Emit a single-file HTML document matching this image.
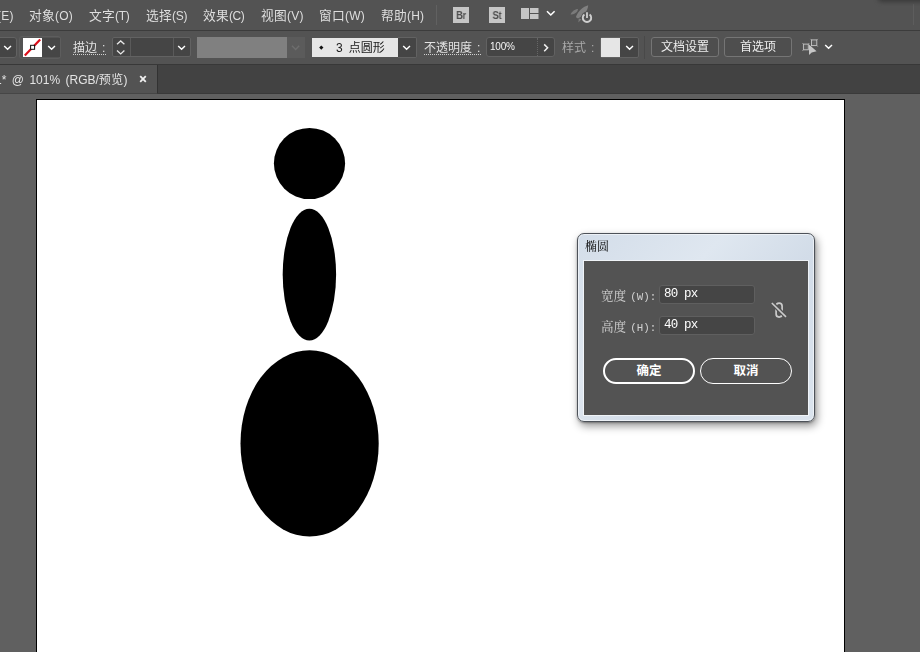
<!DOCTYPE html>
<html lang="zh-CN">
<head>
<meta charset="utf-8">
<title>Adobe Illustrator</title>
<style>
html,body{margin:0;padding:0}
body{width:920px;height:652px;overflow:hidden;position:relative;background:#606060;
  font-family:"Liberation Sans","Noto Sans CJK SC",sans-serif;font-size:12px;line-height:1;color:#dcdcdc}
*{box-sizing:border-box}
#root{position:absolute;left:0;top:0;width:920px;height:652px;overflow:hidden;transform:translateZ(0)}
.abs{position:absolute}
.cj{font-family:"Liberation Sans","Noto Sans CJK SC",sans-serif}
.cj.r{font-family:"Liberation Serif","Noto Serif CJK SC",serif}
.cj.b{font-weight:bold}
#menubar .cj{font-size:1.06em}
#tab .cj{letter-spacing:.3px}
.t{position:absolute;white-space:nowrap;line-height:14px;height:14px}
.t,.lab,.btn,.appbox span,.inp span,.dl,.pill span{will-change:transform}

/* ---------- menu bar ---------- */
#menubar{position:absolute;left:0;top:0;width:920px;height:30px;background:#535353}
#menubar .t{top:9px;color:#dedede;letter-spacing:.25px}
#line1{position:absolute;left:0;top:30px;width:920px;height:1px;background:#3c3c3c}
.appbox span{display:block;transform:scaleX(.86)}
.appbox{position:absolute;top:7px;width:16px;height:16px;background:#c6c6c6;color:#505050;
  font-weight:bold;font-size:11px;line-height:16px;text-align:center;letter-spacing:-0.3px}

/* ---------- control bar ---------- */
#ctrl{position:absolute;left:0;top:31px;width:920px;height:33px;background:#535353}
#line2{position:absolute;left:0;top:64px;width:920px;height:1px;background:#383838}
.dd{position:absolute;background:#454545;border:1px solid #626262}
.lab{position:absolute;top:41px;height:14px;line-height:14px;white-space:nowrap;color:#e2e2e2}
.dot{border-bottom:1px dotted #d0d0d0}
.btn{position:absolute;top:37px;height:20px;border:1px solid #757575;border-radius:3px;background:#4e4e4e;
  color:#ededed;text-align:center;line-height:18px;white-space:nowrap}

/* ---------- tab bar ---------- */
#tabbar{position:absolute;left:0;top:65px;width:920px;height:28px;background:#424242}
#tab{position:absolute;left:0;top:0;width:158px;height:28px;background:#535353;border-right:1px solid #323232}

/* ---------- canvas ---------- */
#art{position:absolute;left:36px;top:99px;width:809px;height:600px;background:#fff;border:1px solid #000}

/* ---------- dialog ---------- */
#dlg{position:absolute;left:577px;top:233px;width:238px;height:189px;border-radius:7px;
  border:1px solid #4d5259;background:linear-gradient(135deg,#d3dde9 0%,#dfe7f0 35%,#d2dce8 60%,#dbe4ee 100%);
  box-shadow:0 0 0 1px rgba(255,255,255,.55) inset, 2px 4px 9px rgba(0,0,0,.42), 0 1px 2px rgba(0,0,0,.3)}
#dlgin{position:absolute;left:6px;top:27px;width:224px;height:154px;background:#535353;
  box-shadow:0 0 0 1px rgba(255,255,255,.6)}
.inp{position:absolute;left:75px;width:96px;height:19px;background:#454545;border:1px solid #5f5f5f;border-radius:3px}
.inp span{position:absolute;left:3.8px;top:1px;font-family:"Liberation Mono",monospace;font-size:12.5px;line-height:14px;
  color:#fff;letter-spacing:-0.8px;white-space:pre}
.dl{position:absolute;left:16.7px;height:14px;line-height:14px;color:#d2d2d2;white-space:pre;
  font-family:"Liberation Mono","Noto Serif CJK SC",monospace;font-size:10.8px}
.dl .cj{font-size:12.6px}
.dl i{font-style:normal;margin-left:-2.3px}
.pill{position:absolute;top:97px;height:26px;border-radius:13px;color:#fff;text-align:center;font-size:12.5px}
</style>
</head>
<body>
<div id="root">

<!-- ================= MENU BAR ================= -->
<div id="menubar">
  <div class="t" style="left:-3px">(E)</div>
  <div class="t" style="left:28.5px"><span class="cj">对象</span>(O)</div>
  <div class="t" style="left:89px"><span class="cj">文字</span><span style="letter-spacing:-.3px">(T)</span></div>
  <div class="t" style="left:146px"><span class="cj">选择</span><span style="letter-spacing:-.25px">(S)</span></div>
  <div class="t" style="left:203px"><span class="cj">效果</span><span style="letter-spacing:-.4px">(C)</span></div>
  <div class="t" style="left:261px"><span class="cj">视图</span>(V)</div>
  <div class="t" style="left:319px"><span class="cj">窗口</span>(W)</div>
  <div class="t" style="left:381px"><span class="cj">帮助</span>(H)</div>
  <div class="abs" style="left:436px;top:5px;width:1px;height:20px;background:#616161"></div>
  <div class="appbox" style="left:453px"><span>Br</span></div>
  <div class="appbox" style="left:489px"><span>St</span></div>
  <!-- workspace layout icon -->
  <svg class="abs" style="left:521px;top:8px" width="18" height="11" viewBox="0 0 18 11">
    <rect x="0" y="0" width="8" height="11" fill="#c6c6c6"/>
    <rect x="9" y="0" width="8.5" height="5" fill="#c6c6c6"/>
    <rect x="9" y="6" width="8.5" height="5" fill="#c6c6c6"/>
  </svg>
  <svg class="abs" style="left:546px;top:10px" width="10" height="7" viewBox="0 0 10 7">
    <path d="M1 1.3 L4.8 5 L8.6 1.3" fill="none" stroke="#fff" stroke-width="1.6"/>
  </svg>
  <!-- rocket / GPU performance icon -->
  <svg class="abs" style="left:568px;top:3px" width="26" height="22" viewBox="0 0 26 22">
    <path d="M20.2 2.2 C15.2 3.4 9.6 8.6 8 13.8 C8.3 15 9.4 15.6 10.4 15.2 C15.4 13 19.8 8 20.2 2.2 Z" fill="#808080"/>
    <path d="M10 6 C7 6 3.8 8.4 2.6 11.5 C5.4 11.8 8 10.2 9.4 8.2 Z" fill="#7a7a7a"/>
    <path d="M10.8 15.4 L10.3 19.6 L13.6 16.2 Z" fill="#7a7a7a"/>
    <circle cx="19" cy="14.7" r="6.1" fill="#535353"/>
    <path d="M16.4 11.5 A4.2 4.2 0 1 0 21.6 11.5" fill="none" stroke="#cfcfcf" stroke-width="1.9"/>
    <path d="M19 9.3 V15" stroke="#cfcfcf" stroke-width="1.8"/>
  </svg>
  <div class="abs" style="left:913px;top:4px;width:1px;height:21px;background:#5d5d5d"></div>
  <div class="abs" style="left:878px;top:-6px;width:60px;height:8px;border-radius:4px;background:#3a3a3a;filter:blur(2px)"></div>
</div>
<div id="line1"></div>

<!-- ================= CONTROL BAR ================= -->
<div id="ctrl"></div>
<div id="line2"></div>

<!-- fill dropdown (cut off at left) -->
<div class="dd" style="left:-4px;top:37px;width:21px;height:21px;border-radius:3px"></div>
<svg class="abs" style="left:3px;top:45px" width="10" height="6" viewBox="0 0 10 6"><path d="M1.2 0.9 L4.6 4.2 L8 0.9" fill="none" stroke="#fff" stroke-width="1.45"/></svg>

<!-- stroke swatch + dropdown -->
<div class="abs" style="left:19px;top:36px;width:42px;height:23px;border-radius:3px;border:1px solid #5d5d5d"></div>
<div class="abs" style="left:42px;top:38px;width:18px;height:19px;background:#464646"></div>
<svg class="abs" style="left:23px;top:38px" width="19" height="19" viewBox="0 0 19 19">
  <rect width="19" height="19" fill="#fff"/>
  <path d="M1.8 17.4 L17.2 1.4" stroke="#dc0f1b" stroke-width="2.2"/>
  <rect x="7.6" y="7.3" width="4" height="4" fill="#fff" stroke="#111" stroke-width="1"/>
</svg>
<svg class="abs" style="left:47px;top:45px" width="10" height="6" viewBox="0 0 10 6"><path d="M1.2 0.9 L4.6 4.2 L8 0.9" fill="none" stroke="#fff" stroke-width="1.45"/></svg>

<!-- stroke label -->
<div class="lab dot" style="left:73px;width:33px"><span class="cj">描边</span><span style="margin-left:5px">:</span></div>

<!-- stroke weight stepper -->
<div class="dd" style="left:112px;top:37px;width:79px;height:20px;border-radius:2px"></div>
<div class="abs" style="left:130px;top:38px;width:1px;height:18px;background:#5a5a5a"></div>
<div class="abs" style="left:173px;top:38px;width:1px;height:18px;background:#5a5a5a"></div>
<svg class="abs" style="left:116px;top:40px" width="10" height="15" viewBox="0 0 10 15">
  <path d="M1 4.2 L4.7 0.9 L8.4 4.2" fill="none" stroke="#e8e8e8" stroke-width="1.3"/>
  <path d="M1 10.6 L4.7 13.9 L8.4 10.6" fill="none" stroke="#e8e8e8" stroke-width="1.3"/>
</svg>
<svg class="abs" style="left:177px;top:45px" width="10" height="6" viewBox="0 0 10 6"><path d="M1.2 0.9 L4.6 4.2 L8 0.9" fill="none" stroke="#fff" stroke-width="1.45"/></svg>

<!-- disabled variable-width profile -->
<div class="abs" style="left:197px;top:37px;width:90px;height:21px;background:#808080"></div>
<div class="abs" style="left:287px;top:37px;width:18px;height:21px;background:#5b5b5b"></div>
<svg class="abs" style="left:291px;top:45px" width="10" height="6" viewBox="0 0 10 6"><path d="M1 0.8 L4.6 4.4 L8.2 0.8" fill="none" stroke="#6e6e6e" stroke-width="1.4"/></svg>

<!-- brush definition -->
<div class="abs" style="left:312px;top:38px;width:86px;height:19px;background:#e6e6e6"></div>
<div class="abs" style="left:320.2px;top:46px;width:2.6px;height:2.6px;background:#111;transform:rotate(45deg)"></div>
<div class="lab thin" style="left:336.4px;color:#1a1a1a">3<span style="margin-left:6px"><span class="cj">点圆形</span></span></div>
<div class="dd" style="left:398px;top:37px;width:19px;height:21px;border-left:none;border-radius:0 2px 2px 0"></div>
<svg class="abs" style="left:402px;top:45px" width="10" height="6" viewBox="0 0 10 6"><path d="M1.2 0.9 L4.6 4.2 L8 0.9" fill="none" stroke="#fff" stroke-width="1.45"/></svg>

<!-- opacity -->
<div class="lab dot" style="left:424px;width:57px"><span class="cj">不透明度</span><span style="margin-left:5px">:</span></div>
<div class="dd" style="left:486px;top:37px;width:69px;height:20px;border-radius:3px"></div>
<div class="abs" style="left:537px;top:38px;width:0;height:18px;border-left:1px dotted #666"></div>
<div class="t" style="left:490px;top:40px;font-size:10px;color:#f4f4f4;letter-spacing:-0.2px">100%</div>
<svg class="abs" style="left:543px;top:43px" width="7" height="10" viewBox="0 0 7 10"><path d="M1.2 1.4 L4.6 4.8 L1.2 8.2" fill="none" stroke="#f2f2f2" stroke-width="1.5"/></svg>

<!-- style -->
<div class="lab" style="left:562px;color:#a9a9a9"><span class="cj">样式</span><span style="margin-left:5px">:</span></div>
<div class="dd" style="left:600px;top:37px;width:39px;height:21px;border-radius:2px"></div>
<div class="abs" style="left:601px;top:38px;width:19px;height:19px;background:#e6e6e6"></div>
<svg class="abs" style="left:625px;top:45px" width="10" height="6" viewBox="0 0 10 6"><path d="M1.2 0.9 L4.6 4.2 L8 0.9" fill="none" stroke="#fff" stroke-width="1.45"/></svg>
<div class="abs" style="left:644px;top:36px;width:1px;height:23px;background:#494949"></div>

<!-- buttons -->
<div class="btn" style="left:651px;width:68px"><span class="cj">文档设置</span></div>
<div class="btn" style="left:724px;width:68px"><span class="cj">首选项</span></div>

<!-- align-to icon -->
<svg class="abs" style="left:800px;top:37px" width="36" height="20" viewBox="0 0 36 20">
  <rect x="3.4" y="7.1" width="4.9" height="5.7" fill="#5f5f5f" stroke="#c6c6c6" stroke-width="0.9"/>
  <rect x="11.5" y="2.9" width="5.3" height="5.7" fill="#5f5f5f" stroke="#c6c6c6" stroke-width="0.9"/>
  <path d="M2.4 6.1 l1.4 1.4 M9.3 6.1 l-1.4 1.4 M2.4 13.8 l1.4 -1.4 M10.5 1.9 l1.4 1.4 M17.8 1.9 l-1.4 1.4 M17.8 9.6 l-1.4 -1.4" stroke="#b0b0b0" stroke-width="0.8"/>
  <path d="M9 7.4 V18 L11.7 15.4 L16.6 14.3 Z" fill="#c6c6c6"/>
  <path d="M25.2 8 L28.6 11.2 L32 8" fill="none" stroke="#fff" stroke-width="1.5"/>
</svg>

<!-- ================= TAB BAR ================= -->
<div id="tabbar">
  <div id="tab">
    <div class="t" style="left:-4.6px;top:8px;color:#e4e4e4;word-spacing:2.1px">1* @ 101% (RGB/<span class="cj">预览</span>)</div>
    <svg class="abs" style="left:139px;top:10px" width="8" height="8" viewBox="0 0 8 8"><path d="M1.2 1.2 L6.8 6.8 M6.8 1.2 L1.2 6.8" stroke="#f0f0f0" stroke-width="1.8"/></svg>
  </div>
</div>

<div class="abs" style="left:0;top:93px;width:920px;height:1px;background:#3a3a3a"></div>
<div class="abs" style="left:0;top:93px;width:157px;height:1px;background:#464646"></div>

<!-- ================= CANVAS ================= -->
<div id="art"></div>
<svg class="abs" style="left:0;top:93px" width="920" height="559" viewBox="0 93 920 559">
  <ellipse cx="309.5" cy="163.5" rx="35.6" ry="35.6" fill="#000"/>
  <ellipse cx="309.4" cy="274.6" rx="26.7" ry="65.9" fill="#000"/>
  <ellipse cx="309.6" cy="443.4" rx="69.1" ry="93.1" fill="#000"/>
</svg>

<!-- ================= ELLIPSE DIALOG ================= -->
<div id="dlg">
  <div class="t" style="left:7px;top:6px;color:#000;font-size:12px"><span class="cj r">椭圆</span></div>
  <div id="dlgin">
    <div class="dl" style="top:28px"><span class="cj r">宽度</span><i> (W):</i></div>
    <div class="inp" style="top:24px"><span>80 px</span></div>
    <div class="dl" style="top:59px"><span class="cj r">高度</span><i> (H):</i></div>
    <div class="inp" style="top:55px"><span>40 px</span></div>
    <!-- constrain proportions (unlinked) -->
    <svg class="abs" style="left:185px;top:38px" width="20" height="22" viewBox="0 0 20 22">
      <rect x="7.1" y="4.1" width="6" height="14" rx="3" fill="none" stroke="#cbcbcb" stroke-width="1.7"/>
      <path d="M2.4 3.6 L17.4 18.3" stroke="#535353" stroke-width="4.2"/>
      <path d="M2.8 4 L17 17.9" stroke="#cbcbcb" stroke-width="1.6"/>
    </svg>
    <div class="pill" style="left:19px;width:92px;border:2px solid #fff;line-height:22px"><span class="cj b">确定</span></div>
    <div class="pill" style="left:116px;width:92px;border:1px solid #fff;line-height:24px"><span class="cj b">取消</span></div>
  </div>
</div>

</div>
</body>
</html>
